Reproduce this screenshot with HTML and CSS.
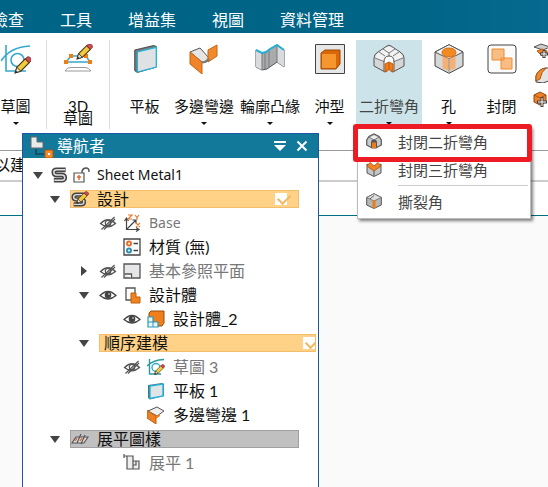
FILE: index.html
```html
<!DOCTYPE html>
<html lang="zh-Hant">
<head>
  <meta charset="utf-8">
  <title>Sheet Metal1</title>
  <link rel="stylesheet" href="styles.css">
</head>
<body>
  <!-- shared icons -->
  <svg class="defs" width="0" height="0" aria-hidden="true">
    <symbol id="pencil" viewBox="0 0 16 16">
      <path d="M1 15l1.500-5L10 2.500l3.500 3.500L6 13.500z" fill="#f3c93d" stroke="#4a3a1c" stroke-width="1"/>
      <path d="M1 15l1.500-5 3.500 3.500z" fill="#f4e3c4" stroke="#333" stroke-width=".8"/>
      <path d="M10 2.500L12 .8h1.600l1.700 1.700v1.700L13.500 6z" fill="#d9474c" stroke="#6b2a2c" stroke-width=".8"/>
      <path d="M1 15l.6-2.200 1.600 1.600z" fill="#222"/>
    </symbol>
    <symbol id="eye" viewBox="0 0 18 18">
      <path d="M1 9.500Q9 1.500 17 9.500Q9 16.500 1 9.500z" fill="#fff" stroke="#444" stroke-width="1.300"/>
      <circle cx="9" cy="9" r="3.300" fill="#444"/>
      <circle cx="10" cy="8" r="1" fill="#aaa"/>
    </symbol>
    <symbol id="eye-off" viewBox="0 0 18 18">
      <path d="M1.500 9.500Q9 2 16.500 9.500Q9 16 1.500 9.500z" fill="none" stroke="#555" stroke-width="1.300"/>
      <circle cx="9" cy="9.200" r="2.700" fill="none" stroke="#555" stroke-width="1.200"/>
      <path d="M2.500 15.500L15.500 3M5 15.500L16 5" stroke="#555" stroke-width="1.200"/>
    </symbol>
    <symbol id="down" viewBox="0 0 18 18">
      <path d="M4 6h10l-5 7z" fill="#444"/>
    </symbol>
    <symbol id="right" viewBox="0 0 18 18">
      <path d="M6 4v10l6-5z" fill="#444"/>
    </symbol>
    <symbol id="sketch" viewBox="0 0 30 30">
      <path d="M5 1v26h20M0 17Q9 3 29 2" fill="none" stroke="#35a9cd" stroke-width="1.600"/>
      <circle cx="16.500" cy="16" r="6.500" fill="none" stroke="#35a9cd" stroke-width="1.600"/>
      <use href="#pencil" x="13" y="12" width="18" height="18"/>
    </symbol>
    <symbol id="plate" viewBox="0 0 30 30">
      <path d="M3 5L24 0l3 1v23L6 30l-3-2z" fill="#777" stroke="#444"/>
      <path d="M6 7l21-5v22L6 29.500z" fill="#dfe1e3" stroke="#23b4dc" stroke-width="1.400"/>
    </symbol>
    <symbol id="solid-s" viewBox="0 0 18 18">
      <path d="M15.500 3.500H6Q3 3.500 3 6.200T6 9h5.500q3 0 3 2.800T11.500 14.500H3" fill="none" stroke="#444" stroke-width="5"/>
      <path d="M15 3.500H6Q3 3.500 3 6.200T6 9h5.500q3 0 3 2.800T11.500 14.500H3.500" fill="none" stroke="#ddd" stroke-width="1.600"/>
    </symbol>
  </svg>

  <nav class="tabs">
    <a href="#">檢查</a>
    <a href="#">工具</a>
    <a href="#">增益集</a>
    <a href="#">視圖</a>
    <a href="#">資料管理</a>
  </nav>

  <div class="ribbon">
    <div class="group">
      <button class="tool tool-edge">
        <svg width="30" height="30"><use href="#sketch"/></svg>
        <span class="caption">草圖</span>
        <span class="arrow"></span>
      </button>
    </div>
    <div class="group">
      <button class="tool tool-3d">
        <svg width="30" height="30" viewBox="0 0 30 30">
          <path d="M3 18L8 12h15l4 6z" fill="none" stroke="#39a7c9" stroke-width="1.500"/>
          <path d="M1 16h4v4H1zM6 10h4v4H6zM21 10h4v4h-4zM25 16h4v4h-4z" fill="#ee7d12"/>
          <path d="M2 27q2-4 6-3.500h14q4 0 6 3.500z" fill="#fff" stroke="#999"/>
          <use href="#pencil" x="13" y="-1" width="17" height="17"/>
        </svg>
        <span class="caption">3D<br>草圖</span>
      </button>
    </div>
    <div class="group group-main">
      <button class="tool">
        <svg width="30" height="30"><use href="#plate" x="2" width="27" height="30"/></svg>
        <span class="caption">平板</span>
      </button>
      <button class="tool wide">
        <svg width="30" height="30" viewBox="0 0 30 30">
          <path d="M1 8L11 4l9 10-6 5z" fill="#e4e5e6" stroke="#555"/>
          <path d="M19 6l9-5v11l-9 6z" fill="#f08a2c" stroke="#c9640f"/>
          <path d="M1 8l12 10v12L1 20z" fill="#ef842a" stroke="#c9640f"/>
          <path d="M13 18q4 1 7-3" fill="none" stroke="#777" stroke-width="2"/>
        </svg>
        <span class="caption">多邊彎邊</span>
        <span class="arrow"></span>
      </button>
      <button class="tool wide">
        <svg width="30" height="30" viewBox="0 0 30 30">
          <path d="M1 6l6 3 4-1 4-3 7-4 7 5v17l-7-5-10 7-5 1-6-3z" fill="#a9abad" stroke="#555"/>
          <path d="M1 6l6 3v17l-6-3zM22 1l7 5v17l-7-5z" fill="#d9dbdc"/>
          <path d="M7 9v17M10 9v16M14 6v17M22 2v16" stroke="#77797b"/>
          <path d="M1 6l6 3 4-1 4-3 7-4 7 5" fill="none" stroke="#28aed3" stroke-width="2"/>
        </svg>
        <span class="caption">輪廓凸緣</span>
        <span class="arrow"></span>
      </button>
      <button class="tool">
        <svg width="30" height="30" viewBox="0 0 30 30">
          <path d="M.500.500h29v29H.500z" fill="#e6e7e9" stroke="#444"/>
          <path d="M6 9l4-3h15v14l-4 5H6z" fill="#d96708" stroke="#9b4a05"/>
          <path d="M7 10h14v14H7z" fill="#f6962f"/>
        </svg>
        <span class="caption">沖型</span>
        <span class="arrow"></span>
      </button>
      <div class="dropdown">
        <button class="tool wide active">
          <svg width="32" height="30" viewBox="0 0 32 30">
            <path d="M1 14q0-4 4-6L14 2q2-1.500 4 0l9 6q4 2 4 6v8l-11 6-4-2-4 2-11-6z" fill="#d4d6d7" stroke="#555"/>
            <path d="M2 14q1-4 4-6l8-5q2-1 4 0l8 5q3 2 4 6l-8 4q-1-6-6-6t-6 6z" fill="#f2f2f3"/>
            <path d="M6 8l6 4M26 8l-6 4M10 5l6 4 6-4M16 9v3M2 14l10 4M30 14l-10 4" fill="none" stroke="#777"/>
            <path d="M11 27v-9q0-6 5-6t5 6v9" fill="#fff" stroke="#555"/>
            <path d="M12 20l4-2 4 2v8l-3-2h-2l-3 2z" fill="#ef7c1a" stroke="#c35c0a"/>
            <path d="M16 18v8" stroke="#c35c0a"/>
          </svg>
          <span class="caption">二折彎角</span>
          <span class="arrow"></span>
        </button>
        <div class="menu">
          <button>
            <svg width="16" height="16" viewBox="0 0 16 16">
              <path d="M.700 7L3 3.500 8 1l5 2.500L15.300 7v5L10 15H6L.700 12z" fill="#c8cacb" stroke="#555" stroke-width="1.200"/>
              <path d="M3 4l5-2.500L13 4l-5 3z" fill="#eee" stroke="#666" stroke-width=".8"/>
              <path d="M5 14V9.500Q5 6.500 8 6.500t3 3V14" fill="#555"/>
              <path d="M6 9.500h4V15H6z" fill="#ee7d12"/>
            </svg>
            封閉二折彎角
          </button>
          <button>
            <svg width="16" height="16" viewBox="0 0 16 16">
              <path d="M1 3l7 4 7-4v9l-7 3.500L1 12z" fill="#c4c6c7" stroke="#555"/>
              <path d="M1 5l3-3.500 4 3.500 4-3.500 3 3.500-7 5z" fill="#ef8526" stroke="#b5611a"/>
              <path d="M8 10v5" stroke="#555"/>
            </svg>
            封閉三折彎角
          </button>
          <hr>
          <button>
            <svg width="16" height="16" viewBox="0 0 16 16">
              <path d="M.700 4.500L8 .700l7.300 3.800v7.500L8 15.500.700 12z" fill="#b5b7b8" stroke="#555"/>
              <path d="M.700 4.500L8 .700l7.300 3.800L8 8z" fill="#dcddde" stroke="#666" stroke-width=".8"/>
              <path d="M4 6l4-3.500M8 8v7" stroke="#666"/>
              <path d="M6.500 7.500h3v7.500l-1.500.500-1.500-.500z" fill="#ee7d12"/>
            </svg>
            撕裂角
          </button>
          <div class="callout"></div>
        </div>
      </div>
      <button class="tool">
        <svg width="30" height="30" viewBox="0 0 30 30">
          <path d="M1 8L15 .700 29 8v14l-14 7.300L1 22z" fill="#d5d7d8" stroke="#444"/>
          <path d="M1 8L15 .700 29 8l-14 7z" fill="#f4f4f4" stroke="#555"/>
          <path d="M8.500 12v12l6.500 3 6.500-3V12L15 15z" fill="#f3b077"/>
          <path d="M15 15v14" stroke="#999"/>
          <ellipse cx="15" cy="8.500" rx="7" ry="4.500" fill="#f28a22" stroke="#d96a0a"/>
        </svg>
        <span class="caption">孔</span>
        <span class="arrow"></span>
      </button>
      <button class="tool">
        <svg width="30" height="30" viewBox="0 0 30 30">
          <rect x="1" y="1" width="28" height="28" rx="3" fill="#fbfbfb" stroke="#444"/>
          <path d="M5 5h12v11H5zM14 14h11v11H14z" fill="#f8bd84" stroke="#ee8c33"/>
        </svg>
        <span class="caption">封閉</span>
      </button>
      <div class="stack">
        <button aria-label="折彎">
          <svg width="18" height="16" viewBox="0 0 18 16">
            <path d="M1 4l7-3 9 3-7 3z" fill="#ccc" stroke="#555"/>
            <path d="M4 8l5-2 5 2v3l-5 2z" fill="#f0812a" stroke="#b85c10"/>
            <path d="M11 7v8M7 11h8" stroke="#444" stroke-width="3"/>
            <path d="M11 8v6M8 11h6" stroke="#fff"/>
          </svg>
        </button>
        <button aria-label="倒圓">
          <svg width="18" height="16" viewBox="0 0 18 16">
            <path d="M3 15V9q2-7 10-8h5v12l-8 3z" fill="#e3e4e5" stroke="#444"/>
            <path d="M3 14V9Q5 2 13 1q-5 4-6 11z" fill="#f28b2d" stroke="#a9560e"/>
          </svg>
        </button>
        <button aria-label="新增">
          <svg width="18" height="16" viewBox="0 0 18 16">
            <path d="M1 4l6-3 6 3v7l-6 3-6-3z" fill="#f0812a" stroke="#8c4a12"/>
            <path d="M1 4l6 3 6-3" fill="none" stroke="#a9560e"/>
            <path d="M9 6v10M4 11h10" stroke="#444" stroke-width="3"/>
            <path d="M9 7v8M5 11h8" stroke="#fff"/>
          </svg>
        </button>
      </div>
    </div>
  </div>

  <div class="prompt">以建</div>
  <div class="docbar"></div>
  <main class="canvas"></main>

  <section class="navigator">
    <header>
      <svg width="26" height="24" viewBox="0 0 26 24">
        <path d="M2 3h6v5h6v6H2z" fill="#e9eaea" stroke="#666"/>
        <path d="M7 15v6M7 20h8" stroke="#134a5c" stroke-width="1.500"/>
        <path d="M16 16h8v8h-8z" fill="#f08a2c" stroke="#a8540c"/>
        <path d="M19 19h2v2h-2z" fill="#fff"/>
      </svg>
      <h2>導航者</h2>
      <button aria-label="選項">
        <svg width="12" height="12" viewBox="0 0 12 12"><path d="M0 1h12v2H0zM0 5h12l-6 6z" fill="#fff"/></svg>
      </button>
      <button aria-label="關閉">
        <svg width="12" height="12" viewBox="0 0 12 12"><path d="M1.500 1.500l9 9M10.500 1.500l-9 9" stroke="#fff" stroke-width="2"/></svg>
      </button>
    </header>

    <ul class="tree">
      <li class="row root">
        <svg class="icon"><use href="#down"/></svg>
        <svg class="icon"><use href="#solid-s" width="17" height="18"/></svg>
        <svg class="icon" viewBox="0 0 18 18">
          <path d="M1 7h10v9H1z" fill="#fff" stroke="#555" stroke-width="1.200"/>
          <path d="M9 7V5q1-3 4-3t3 3v1" fill="none" stroke="#555" stroke-width="1.400"/>
          <path d="M6 9v5M4 11h4" stroke="#e46b2b" stroke-width="1.500"/>
        </svg>
        <span class="label latin">Sheet Metal1</span>
      </li>
      <li class="row level-1">
        <svg class="icon"><use href="#down"/></svg>
        <div class="bar">
          <svg class="icon">
            <use href="#solid-s" y="1" width="16" height="17"/>
            <use href="#pencil" x="5" y="1" width="13" height="13"/>
          </svg>
          <label class="label" for="design">設計</label>
          <input type="checkbox" id="design" checked>
        </div>
      </li>
      <li class="row level-2 dim">
        <span class="icon"></span>
        <svg class="icon"><use href="#eye-off"/></svg>
        <svg class="icon" viewBox="0 0 18 18">
          <path d="M3.500 5v10.500H15M3.500 15.500L13 6M1.500 7l2-3 2 3M13 13.500l3 2-3 2M9.500 6H13v3.500" fill="none" stroke="#444" stroke-width="1.200"/>
          <path d="M5 1h4L5 5h4M12 1l2 2.500L16 1M14 3.500V6M13 9l4 4M17 9l-4 4" fill="none" stroke="#e47a2c" stroke-width="1.200"/>
        </svg>
        <span class="label latin">Base</span>
      </li>
      <li class="row level-2">
        <span class="icon"></span>
        <span class="icon"></span>
        <svg class="icon" viewBox="0 0 18 18">
          <path d="M1 1h16v16H1z" fill="#fff" stroke="#444" stroke-width="1.300"/>
          <circle cx="6" cy="5.500" r="2" fill="none" stroke="#e5702a" stroke-width="2"/>
          <circle cx="6" cy="12.500" r="2" fill="none" stroke="#2d8fb3" stroke-width="2"/>
          <path d="M10.500 5.500H15M10.500 12.500H15" stroke="#444" stroke-width="1.300"/>
        </svg>
        <span class="label">材質 (無)</span>
      </li>
      <li class="row level-2 dim">
        <svg class="icon"><use href="#right"/></svg>
        <svg class="icon"><use href="#eye-off"/></svg>
        <svg class="icon" viewBox="0 0 18 18">
          <path d="M1 2h16v14H1z" fill="#e6e6e8" stroke="#555" stroke-width="1.300"/>
          <path d="M1.500 12h7v4" fill="#fff" stroke="#555" stroke-width="1.300"/>
        </svg>
        <span class="label">基本參照平面</span>
      </li>
      <li class="row level-2">
        <svg class="icon"><use href="#down"/></svg>
        <svg class="icon"><use href="#eye"/></svg>
        <svg class="icon" viewBox="0 0 18 18">
          <path d="M3 2h9v12H3z" fill="#fff" stroke="#555" stroke-width="1.300"/>
          <path d="M8 7h5v4h4v6H8z" fill="#f08321" stroke="#c05f0c"/>
        </svg>
        <span class="label">設計體</span>
      </li>
      <li class="row level-3">
        <span class="icon"></span>
        <svg class="icon"><use href="#eye"/></svg>
        <svg class="icon" viewBox="0 0 18 18">
          <path d="M2 3l2-2h13v12l-2 3H2z" fill="#ef7f1d" stroke="#9c4d0a"/>
          <path d="M1 7h5v5h5v5H1z" fill="#e8f6fa" stroke="#2b9abb" stroke-width="1.200"/>
          <path d="M1 12h5v5" fill="none" stroke="#2b9abb"/>
        </svg>
        <span class="label">設計體_2</span>
      </li>
      <li class="row level-2">
        <svg class="icon"><use href="#down"/></svg>
        <div class="bar bar-text">
          <label class="label" for="ordered">順序建模</label>
          <input type="checkbox" id="ordered" checked>
        </div>
      </li>
      <li class="row level-3 dim">
        <span class="icon"></span>
        <svg class="icon"><use href="#eye-off"/></svg>
        <svg class="icon" viewBox="0 0 18 18">
          <path d="M2.500 1v15H14M0 8Q6 2 17 1.500" fill="none" stroke="#2a9a9f" stroke-width="1.400"/>
          <circle cx="9" cy="9.500" r="4" fill="none" stroke="#35a9cd" stroke-width="1.400"/>
          <use href="#pencil" x="7" y="6" width="11" height="11"/>
        </svg>
        <span class="label">草圖 3</span>
      </li>
      <li class="row level-3">
        <span class="icon"></span>
        <span class="icon"></span>
        <svg class="icon" viewBox="0 0 18 18">
          <path d="M1 3l14-2 2 1v12L3 17.500 1 16z" fill="#4a7580"/>
          <path d="M3 4l13-2v12L3 16.500z" fill="#e1e4e6" stroke="#23b4dc" stroke-width="1.400"/>
        </svg>
        <span class="label">平板 1</span>
      </li>
      <li class="row level-3">
        <span class="icon"></span>
        <span class="icon"></span>
        <svg class="icon" viewBox="0 0 18 18">
          <path d="M1 5l9-4 7 4-7 5z" fill="#eee" stroke="#555"/>
          <path d="M0 4.500L9 10v8L0 12z" fill="#ee7f22" stroke="#c05f0c"/>
          <path d="M9 10l4-2v2l-4 3z" fill="#ee7f22"/>
        </svg>
        <span class="label">多邊彎邊 1</span>
      </li>
      <li class="row level-1">
        <svg class="icon"><use href="#down"/></svg>
        <div class="bar bar-gray">
          <svg class="icon" viewBox="0 0 18 18">
            <path d="M1 13l4-6h12l-4 6z" fill="#ddd" stroke="#555" stroke-width="1.200"/>
            <path d="M6 13l4-9M10 14l4-9" stroke="#555" stroke-width="1.200"/>
            <path d="M4 11l2-3M9 11l2-3" stroke="#e0672c" stroke-width="1.300"/>
          </svg>
          <span class="label">展平圖樣</span>
        </div>
      </li>
      <li class="row level-2 dim">
        <span class="icon"></span>
        <span class="icon"></span>
        <svg class="icon" viewBox="0 0 18 18">
          <path d="M1 2h9v5h6v8H4V2" fill="#eee" stroke="#555" stroke-width="1.200"/>
          <path d="M10 7v8M1 0v4M10 11h3V7" fill="none" stroke="#555" stroke-width="1.200"/>
        </svg>
        <span class="label">展平 1</span>
      </li>
    </ul>
  </section>
</body>
</html>
```
FILE: styles.css
```css
* {
  box-sizing: border-box;
}

body {
  margin: 0;
  min-height: 100vh;
  display: flex;
  flex-direction: column;
  overflow: hidden;
  background: #fff;
  color: #111;
  font: 16px Lato, "Noto Sans CJK TC", sans-serif;
}

button {
  border: 0;
  padding: 0;
  background: none;
  color: inherit;
  font: inherit;
  cursor: pointer;
}

.defs {
  position: absolute;
}

/* tabs, scrolled a little to the left */
.tabs {
  display: flex;
  align-items: center;
  gap: 36px;
  height: 33px;
  margin-left: -8px;
  padding-top: 7px;
  background: linear-gradient(90deg, #006487 75%, #066a90);
}

.tabs a {
  color: #fff;
  line-height: 24px;
  text-decoration: none;
  white-space: nowrap;
}

/* ribbon */
.ribbon {
  display: flex;
  height: 118px;
  padding-top: 7px;
  border-bottom: 1px solid #999;
}

.group {
  display: flex;
  flex: none;
  height: 89px;
  border-right: 1px solid #ddd;
}

.group-main {
  padding-left: 8px;
  border: 0;
}

.tool {
  display: flex;
  flex-direction: column;
  align-items: center;
  width: 53px;
  height: 89px;
  padding-top: 4px;
  font-size: 15px;
}

.tool-edge {
  width: 46px;
  padding-right: 15px;
}

.tool-3d {
  width: 62px;
}

.wide {
  width: 66px;
}

.active {
  background: #cce4e9;
  color: #444;
}

.caption {
  margin-top: 26px;
  line-height: 12px;
  white-space: nowrap;
}

.arrow {
  margin-top: 10px;
  border: 3px solid transparent;
  border-top-color: #111;
  border-bottom: 0;
}

.stack {
  display: flex;
  flex-direction: column;
  gap: 8px;
  padding: 3px 0 0 5px;
}

.stack svg {
  display: block;
}

/* drop-down menu */
.dropdown {
  position: relative;
}

.menu {
  position: absolute;
  z-index: 2;
  top: 86px;
  left: 1px;
  width: 174px;
  padding: 0 2px 3px 8px;
  background: #fff;
  border: 1px solid #bbb;
  box-shadow: 2px 2px 3px rgba(0, 0, 0, 0.5);
  color: #444;
}

.menu button {
  display: flex;
  align-items: center;
  gap: 16px;
  width: 100%;
  height: 28px;
  font-size: 15px;
}

.menu hr {
  margin: 2px 0 1px 32px;
  border: 0;
  border-top: 1px solid #ccc;
}

.callout {
  position: absolute;
  top: -3px;
  left: -5px;
  right: -2px;
  height: 38px;
  border: 5px solid #ed1c24;
  border-radius: 3px;
}

/* bars below the ribbon */
.prompt {
  height: 31px;
  border-bottom: 2px solid #ccc;
  line-height: 27px;
  text-indent: -6px;
}

.docbar {
  height: 34px;
  border-bottom: 1px solid #006f80;
}

.canvas {
  flex: 1;
  background: #fafafa;
}

/* floating navigator window */
.navigator {
  position: absolute;
  top: 133px;
  bottom: 0;
  left: 22px;
  width: 297px;
  background: #fff;
  border: 1px solid #1d56a5;
  border-bottom: 0;
}

.navigator header {
  display: flex;
  align-items: center;
  gap: 10px;
  height: 24px;
  padding: 0 10px 0 6px;
  background: #12799b;
  color: #fff;
}

.navigator header svg {
  display: block;
}

.navigator h2 {
  flex: 1;
  margin: 0 0 0 -8px;
  font-size: 16px;
  font-weight: normal;
  line-height: 24px;
}

.tree {
  margin: 0;
  padding: 5px 0 0;
  list-style: none;
}

.row {
  display: flex;
  align-items: center;
  gap: 6px;
  height: 24px;
  line-height: 18px;
  white-space: nowrap;
}

.root {
  gap: 4px;
  padding-left: 6px;
}

.level-1 {
  padding: 0 19px 0 23px;
}

.level-2 {
  padding: 0 2px 0 52px;
}

.level-3 {
  padding-left: 76px;
}

.icon {
  flex: none;
  width: 18px;
  height: 18px;
}

.label {
  margin-left: 2px;
}

.latin {
  font-family: "Noto Sans", sans-serif;
  font-size: 14px;
}

.dim {
  color: #777;
}

.bar {
  display: flex;
  flex: 1;
  align-items: center;
  gap: 6px;
  height: 18px;
  background: #ffd288;
  border: 1px solid #f3bd6c;
}

.bar-text {
  padding-left: 2px;
}

.bar-gray {
  background: #c0c0c0;
  border-color: #a0a0a0;
}

.bar input {
  position: relative;
  appearance: none;
  width: 12px;
  height: 12px;
  margin: 0 11px 0 auto;
  background: #fff;
}

.bar-text input {
  margin-right: 0;
  overflow: hidden;
}

.bar input:checked::after {
  content: "";
  position: absolute;
  top: -1px;
  left: 5px;
  width: 6px;
  height: 10px;
  border: solid #f3b660;
  border-width: 0 2px 2px 0;
  transform: rotate(45deg);
}
```
